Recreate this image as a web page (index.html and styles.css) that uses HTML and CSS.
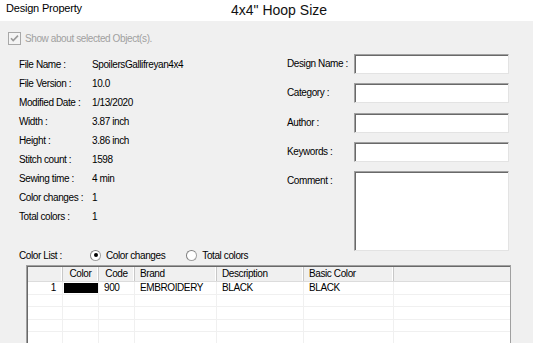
FILE: index.html
```html
<!DOCTYPE html>
<html>
<head>
<meta charset="utf-8">
<link rel="stylesheet" href="styles.css">
</head>
<body>
<div class="titlebar">
  <span class="title">Design Property</span>
  <span class="hoop">4x4" Hoop Size</span>
</div>
<div class="main">
  <div class="checkrow">
    <svg class="checkbox" width="13" height="13" viewBox="0 0 13 13">
      <rect x="0.5" y="0.5" width="12" height="12" fill="#f4f4f4" stroke="#a8a8a8"/>
      <path d="M3 6.2 L5.2 8.6 L10 3.6" fill="none" stroke="#9a9a9a" stroke-width="1.6"/>
    </svg>
    <span class="disabled">Show about selected Object(s).</span>
  </div>
  <div class="content">
    <div class="info">
      <div class="irow"><span class="ilabel">File Name :</span><span>SpoilersGallifreyan4x4</span></div>
      <div class="irow"><span class="ilabel">File Version :</span><span>10.0</span></div>
      <div class="irow"><span class="ilabel">Modified Date :</span><span>1/13/2020</span></div>
      <div class="irow"><span class="ilabel">Width :</span><span>3.87 inch</span></div>
      <div class="irow"><span class="ilabel">Height :</span><span>3.86 inch</span></div>
      <div class="irow"><span class="ilabel">Stitch count :</span><span>1598</span></div>
      <div class="irow"><span class="ilabel">Sewing time :</span><span>4 min</span></div>
      <div class="irow"><span class="ilabel">Color changes :</span><span>1</span></div>
      <div class="irow"><span class="ilabel">Total colors :</span><span>1</span></div>
    </div>
    <div class="form">
      <div class="frow"><span class="flabel">Design Name :</span><div class="field"></div></div>
      <div class="frow"><span class="flabel">Category :</span><div class="field"></div></div>
      <div class="frow"><span class="flabel">Author :</span><div class="field"></div></div>
      <div class="frow"><span class="flabel">Keywords :</span><div class="field"></div></div>
      <div class="frow"><span class="flabel">Comment :</span><div class="field area"></div></div>
    </div>
  </div>
  <div class="colorlist">
    <span class="cl-label">Color List :</span>
    <span class="radio on"></span><span class="r-text">Color changes</span>
    <span class="radio"></span><span class="r-text">Total colors</span>
  </div>
  <div class="grid">
    <div class="ghead">
      <div class="c c0"></div>
      <div class="c c1 center">Color</div>
      <div class="c c2 center">Code</div>
      <div class="c c3">Brand</div>
      <div class="c c4">Description</div>
      <div class="c c5">Basic Color</div>
      <div class="c c6"></div>
    </div>
    <div class="grow">
      <div class="c c0 num">1</div>
      <div class="c c1"><div class="swatch"></div></div>
      <div class="c c2">900</div>
      <div class="c c3">EMBROIDERY</div>
      <div class="c c4">BLACK</div>
      <div class="c c5">BLACK</div>
      <div class="c c6"></div>
    </div>
    <div class="grow"><div class="c c0"></div><div class="c c1"></div><div class="c c2"></div><div class="c c3"></div><div class="c c4"></div><div class="c c5"></div><div class="c c6"></div></div>
    <div class="grow"><div class="c c0"></div><div class="c c1"></div><div class="c c2"></div><div class="c c3"></div><div class="c c4"></div><div class="c c5"></div><div class="c c6"></div></div>
    <div class="grow"><div class="c c0"></div><div class="c c1"></div><div class="c c2"></div><div class="c c3"></div><div class="c c4"></div><div class="c c5"></div><div class="c c6"></div></div>
    <div class="grow"><div class="c c0"></div><div class="c c1"></div><div class="c c2"></div><div class="c c3"></div><div class="c c4"></div><div class="c c5"></div><div class="c c6"></div></div>
  </div>
</div>
</body>
</html>
```

FILE: styles.css
```css
html, body {
  margin: 0;
  padding: 0;
  width: 533px;
  height: 343px;
  overflow: hidden;
  background: #f0f0f0;
  font-family: "Liberation Sans", Arial, sans-serif;
  font-size: 10px;
  letter-spacing: -0.4px;
  color: #000;
}
.titlebar {
  height: 21px;
  background: #fff;
  display: flex;
  align-items: flex-start;
  letter-spacing: 0;
}
.title {
  font-size: 11px;
  margin: 2px 0 0 6px;
  width: 225px;
  letter-spacing: -0.2px;
}
.hoop {
  font-size: 14px;
  margin-top: 2px;
  color: #111;
}
.main {
  padding: 11px 0 0 0;
}
.checkrow {
  display: flex;
  align-items: center;
  height: 13px;
  padding-left: 8px;
}
.checkbox { display: block; }
.disabled {
  color: #a0a0a0;
  margin-left: 4px;
}
.content {
  display: flex;
  margin-top: 9px;
}
.info {
  width: 268px;
  padding-left: 19px;
  padding-top: 1px;
}
.irow {
  display: flex;
  height: 19px;
  align-items: center;
}
.ilabel {
  width: 73px;
}
.form {
  display: flex;
  flex-direction: column;
  gap: 9.3px;
}
.frow {
  display: flex;
}
.flabel {
  width: 67px;
  line-height: 20px;
}
.field {
  width: 153px;
  height: 18px;
  background: #fff;
  border: 1px solid;
  border-color: #a0a0a0 #e3e3e3 #e3e3e3 #a0a0a0;
  box-shadow: inset 1px 1px 0 #696969;
}
.field.area {
  height: 78px;
}
.colorlist {
  display: flex;
  align-items: center;
  height: 14px;
  margin-top: -3px;
  padding-left: 19px;
}
.cl-label { width: 71px; }
.radio {
  width: 9px;
  height: 9px;
  border-radius: 50%;
  background: #fff;
  border: 1px solid #a0a0a0;
  border-top-color: #808080;
  border-left-color: #808080;
  position: relative;
  margin-right: 5px;
}
.radio.on::after {
  content: "";
  position: absolute;
  left: 2.5px;
  top: 2.5px;
  width: 4px;
  height: 4px;
  border-radius: 50%;
  background: #000;
}
.r-text { margin-right: 21px; }
.grid {
  margin: 3px 0 0 26px;
  width: 482px;
  border-top: 1px solid #a0a0a0;
  border-left: 1px solid #a0a0a0;
  border-right: 1px solid #a0a0a0;
  box-shadow: inset 1px 1px 0 #696969;
  padding: 1px 0 0 1px;
  background: #fff;
}
.ghead, .grow {
  display: flex;
}
.ghead {
  height: 14px;
  background: #f0f0f0;
  border-bottom: 1px solid #dcdcdc;
}
.ghead .c {
  border-right: 1px solid #c8c8c8;
  box-shadow: inset -1px 0 0 #fff;
  line-height: 14px;
}
.grow {
  height: 12.5px;
  border-bottom: 1px solid #f0f0f0;
  box-sizing: border-box;
}
.grow .c {
  border-right: 1px solid #f0f0f0;
  line-height: 12px;
}
.c {
  box-sizing: border-box;
  padding-left: 5px;
  white-space: nowrap;
  overflow: hidden;
}
.c0 { width: 35px; }
.c1 { width: 36px; }
.c2 { width: 36px; }
.c3 { width: 82px; }
.c4 { width: 87px; }
.c5 { width: 90px; }
.c6 { flex: 1; border-right: none !important; box-shadow: none !important; }
.center { text-align: center; padding-left: 0; }
.num { text-align: right; padding-right: 6px; }
.grow .c1 { padding: 1px 0 1px 1px; }
.swatch {
  height: 10px;
  background: #000;
}
```
